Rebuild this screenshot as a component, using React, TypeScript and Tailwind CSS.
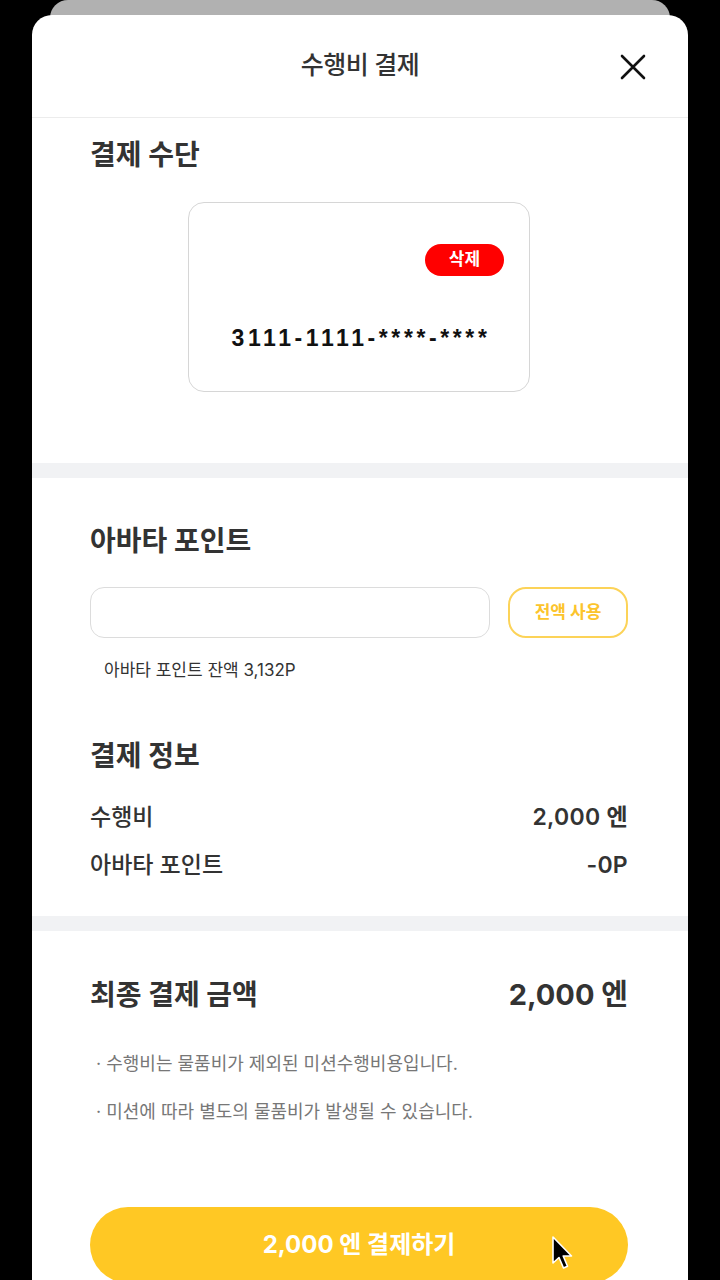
import React from "react";

const font = { fontFamily: 'Inter, "Noto Sans CJK KR", "Noto Sans", sans-serif' };
const cardFont = { fontFamily: '"Liberation Sans", Arial, sans-serif' };

export default function App() {
  return (
    <div className="relative w-[720px] h-[1280px] overflow-hidden bg-black" style={font}>
      {/* back sheet */}
      <div className="absolute left-[50px] top-0 w-[620px] h-[60px] rounded-t-[18px] bg-[#b1b1b1]" />
      {/* main sheet */}
      <div className="absolute left-[32px] top-[15px] w-[656px] h-[1285px] rounded-[20px] bg-white flex flex-col">
        {/* header */}
        <div className="relative h-[102px] flex items-center justify-center">
          <span className="text-[25px] font-medium text-[#333] tracking-[-0.5px]">수행비 결제</span>
          <svg className="absolute left-[588px] top-[39px]" width="26" height="26" viewBox="0 0 26 26">
            <path d="M2 2 L24 24 M24 2 L2 24" stroke="#111" strokeWidth="2.6" strokeLinecap="round" />
          </svg>
        </div>
        <div className="h-px bg-[#ececec]" />

        {/* payment method */}
        <div className="pl-[58px] pr-[60px] pt-[19px] pb-[71px] flex flex-col">
          <h2 className="text-[28px] leading-[36px] font-bold text-[#333]">결제 수단</h2>
          <div className="mt-[29px] self-center w-[342px] h-[190px] rounded-[16px] border border-[#d6d6d6] flex flex-col pt-[41px]">
            <div className="flex justify-end pr-[25px]">
              <div className="w-[79px] h-[32px] rounded-full bg-[#ff0000] flex items-center justify-center text-white text-[17px] font-bold">
                삭제
              </div>
            </div>
            <div className="mt-[47px] flex justify-center">
              <span
                className="pl-[4px] text-[23px] leading-[30px] font-bold text-[#111] tracking-[3.6px]"
                style={cardFont}
              >
                3111-1111-****-****
              </span>
            </div>
          </div>
        </div>

        <div className="h-[15px] bg-[#f1f2f4]" />

        {/* avatar point */}
        <div className="pl-[58px] pr-[60px] pt-[45px] flex flex-col">
          <h2 className="text-[28px] leading-[36px] font-bold text-[#333]">아바타 포인트</h2>
          <div className="mt-[28px] flex gap-[18px]">
            <div className="flex-1 h-[51px] rounded-[14px] border border-[#dcdcdc]" />
            <div className="w-[120px] h-[51px] rounded-[18px] border-2 border-[#fcd358] flex items-center justify-center text-[17px] font-bold text-[#fcc42c]">
              전액 사용
            </div>
          </div>
          <p className="mt-[20px] pl-[14px] text-[17px] leading-[24px] text-[#333]">아바타 포인트 잔액 3,132P</p>

          {/* payment info */}
          <h2 className="mt-[56px] text-[28px] leading-[36px] font-bold text-[#333]">결제 정보</h2>
          <div className="mt-[28px] flex justify-between text-[23px] leading-[30px] font-medium text-[#333]">
            <span>수행비</span>
            <span className="font-semibold tracking-[0.3px]">2,000 엔</span>
          </div>
          <div className="mt-[18px] mb-[36px] flex justify-between text-[23px] leading-[30px] font-medium text-[#333]">
            <span>아바타 포인트</span>
            <span className="font-semibold tracking-[0.3px]">-0P</span>
          </div>
        </div>

        <div className="h-[15px] bg-[#f1f2f4]" />

        {/* final */}
        <div className="pl-[58px] pr-[60px] pt-[44px] flex flex-col">
          <div className="flex justify-between items-center text-[#333] font-bold">
            <span className="text-[28px] leading-[40px]">최종 결제 금액</span>
            <span className="text-[29px] leading-[40px]">2,000 엔</span>
          </div>
          <p className="mt-[36px] pl-[6px] text-[18px] leading-[26px] text-[#777]">· 수행비는 물품비가 제외된 미션수행비용입니다.</p>
          <p className="mt-[22px] pl-[6px] text-[18px] leading-[26px] text-[#777]">· 미션에 따라 별도의 물품비가 발생될 수 있습니다.</p>
          <div className="mt-[82px] h-[76px] rounded-full bg-[#ffc824] flex items-center justify-center text-white text-[24px] font-bold">
            2,000 엔 결제하기
          </div>
        </div>
      </div>

      {/* cursor */}
      <svg className="absolute left-[551px] top-[1235px]" width="24" height="36" viewBox="0 0 24 36">
        <path
          d="M2 2 L2 28 L8 22.5 L12.5 33 L16.5 31.2 L12.2 21 L20.5 21 Z"
          fill="#000"
          stroke="#fff"
          strokeWidth="1.6"
          strokeLinejoin="round"
        />
      </svg>
    </div>
  );
}
